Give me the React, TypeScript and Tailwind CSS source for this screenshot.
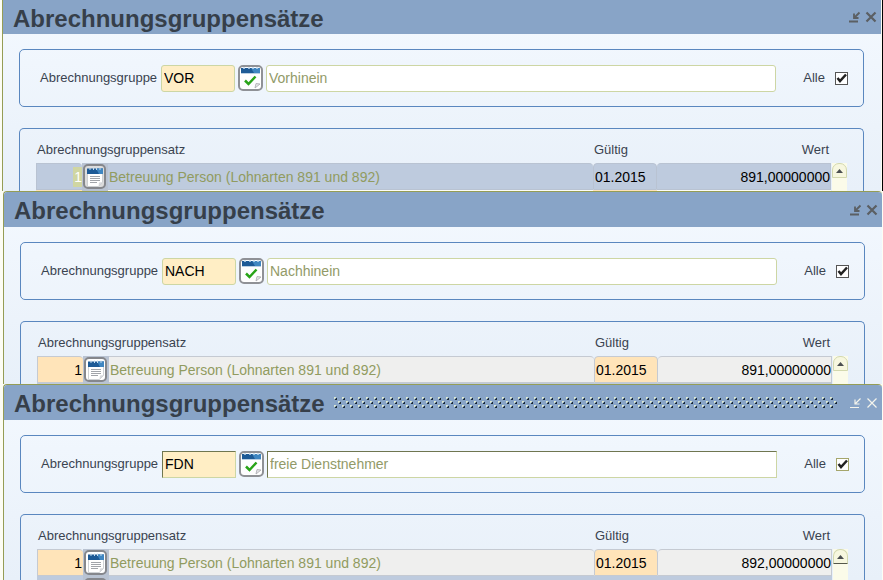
import { clsx } from 'clsx';

interface GroupRate {
  index: number;
  label: string;
  valid: string;
  value: string;
}

interface RateWindowProps {
  id: string;
  code: string;
  name: string;
  rate: GroupRate;
  active?: boolean;
  selected?: boolean;
  className?: string;
}

function CalendarCheckIcon() {
  return (
    <svg viewBox="0 0 21 22" className="h-[22px] w-[21px] shrink-0" aria-hidden="true">
      <path d="M1 3h19v14l-4 4H1z" fill="#fdfdfe" />
      <path d="M1 1h19v5H1z" fill="#1d5a96" />
      <path d="M11 1h9v5h-6z" fill="#3f86c1" />
      <path d="M4 0v2M9 0v2M13 0v2M17 0v2" stroke="#c5dcef" strokeWidth="1.5" />
      <path d="M1 6.500h19" stroke="#b9cfe3" />
      <path d="M5 13.500l3.500 3.500 7-7.500" fill="none" stroke="#28a318" strokeWidth="2.500" />
      <path d="M15 21l1-4.500 4 .5z" fill="#e5e5e8" stroke="#a9a9ae" strokeWidth="0.800" />
    </svg>
  );
}

function CalendarListIcon() {
  return (
    <svg viewBox="0 0 18 20" className="h-[20px] w-[18px] shrink-0" aria-hidden="true">
      <path d="M1.500 4h15v11.500l-4 4h-11z" fill="#fff" stroke="#c3c6ca" strokeWidth="0.800" />
      <path d="M1 1.500h16V7H1z" fill="#1d5a96" />
      <path d="M10 1.500h7V7h-4z" fill="#3f86c1" />
      <path d="M4 .5V3M7.500.5V3M10.500.5V3M14 .5V3" stroke="#c5dcef" />
      <path d="M4 9.500h10M4 11.500h10M4 13.500h10M4 15.500h7" stroke="#a2a5aa" />
      <path d="M12.500 19.500l.5-4 3.500-.5z" fill="#d9dadd" />
    </svg>
  );
}

function TitleBar({ active, short }: { active?: boolean; short?: boolean }) {
  return (
    <header
      className={clsx('flex shrink-0 items-center bg-[#88a4c7] pl-2.5 pr-1', short ? 'h-[34px]' : 'h-[35px]')}
    >
      <h2 className="pt-[3px] text-[24px] leading-[28px] font-bold text-[#363f4a]">
        Abrechnungsgruppensätze
      </h2>
      <div className="ml-2 mr-3 h-3 flex-1">
        {active && (
          <svg className="h-3 w-full" aria-hidden="true">
            <defs>
              <pattern id="grip" width="8" height="8" patternUnits="userSpaceOnUse">
                <path d="M1 0h2v1H2v1H1zM5 4h2v1H6v1H5z" fill="#dde8cf" />
                <path d="M3 1h1v2H2V2h1zM7 5h1v2H6V6h1z" fill="#1c2a33" />
              </pattern>
            </defs>
            <rect width="100%" height="12" fill="url(#grip)" />
          </svg>
        )}
      </div>
      <div className={clsx('flex items-center gap-1', active ? 'text-[#f4f4ec]' : 'text-[#5b5f63]')}>
        <button type="button" aria-label="Minimieren">
          <svg viewBox="0 0 12 12" className="size-3" fill="none" stroke="currentColor" strokeWidth={active ? 1.2 : 1.8}>
            <path d="M0 10.500h9M10.500 1.500L5 7M5 2.500V7h4.500" />
          </svg>
        </button>
        <button type="button" aria-label="Schließen">
          <svg viewBox="0 0 12 12" className="size-3" fill="none" stroke="currentColor" strokeWidth={active ? 1.2 : 2.2}>
            <path d="M1.500 1.500l9 9M10.500 1.500l-9 9" />
          </svg>
        </button>
      </div>
    </header>
  );
}

function ScrollColumn({ active }: { active?: boolean }) {
  return (
    <div className="ml-px mt-[34px] flex w-[15px] shrink-0 flex-col bg-[#fbfbe9]">
      <button
        type="button"
        aria-label="Nach oben"
        className={clsx(
          'flex h-[15px] items-center justify-center rounded-t-[7px] border border-[#d3d8ae] bg-[#f7f7df]',
          active && 'border-b-[#55584a]'
        )}
      >
        <svg viewBox="0 0 7 4" className="h-1 w-[7px]" aria-hidden="true">
          <path d="M0 4l3.500-4L7 4z" fill="#4b4e50" />
        </svg>
      </button>
    </div>
  );
}

function RateWindow({ id, code, name, rate, active, selected, className }: RateWindowProps) {
  const fieldBorder = active
    ? 'border border-[#cdd6a4] border-t-[#6f7650] border-l-[#6f7650]'
    : 'rounded-[3px] border border-[#cdd6a4]';
  const cell = selected ? 'border-[#b9c3d2] bg-[#becbde]' : 'border-[#c5cad2] bg-[#efefee]';
  const keyCell = selected ? 'border-[#b9c3d2] bg-[#becbde]' : 'border-[#c5cad2] bg-[#ffe4b9]';
  const nextCell = selected ? 'bg-[#fdfdf6]' : 'bg-[#becbde]';
  const nextKeyCell = selected ? 'bg-[#ffe4b9]' : 'bg-[#becbde]';

  return (
    <section
      className={clsx(
        'flex flex-col overflow-hidden border-l border-[#959d55] bg-linear-to-b from-[#f4f9ff] to-[#e8f0f9]',
        !selected && 'rounded-t-[4px] border-t',
        className
      )}
    >
      <TitleBar active={active} short={selected} />

      <div className="flex grow flex-col gap-[21px] pt-[15px] pl-4 pr-[17px]">
        {/* Filter */}
        <div className="flex h-[58px] shrink-0 items-center rounded-[5px] border border-[#5a87bf] pl-5 pr-[15px]">
          <label htmlFor={`${id}-code`} className="w-[121px] shrink-0 text-[13px] leading-5 text-[#3a4350]">
            Abrechnungsgruppe
          </label>
          <input
            id={`${id}-code`}
            defaultValue={code}
            className={clsx('h-[27px] w-[74px] shrink-0 bg-[#ffeec5] px-0.5 text-[14px] text-black', fieldBorder)}
          />
          <button
            type="button"
            aria-label="Auswahl öffnen"
            className="mx-[3px] flex h-[26px] w-[25px] shrink-0 items-center justify-center rounded-[5px] border-2 border-[#8f9196] bg-white"
          >
            <CalendarCheckIcon />
          </button>
          <input
            aria-label="Bezeichnung"
            defaultValue={name}
            readOnly
            className={clsx('h-[27px] min-w-0 grow bg-white px-0.5 text-[14px] text-[#929a68]', fieldBorder)}
          />
          <label className="ml-[27px] flex shrink-0 items-center gap-2.5 text-[13px] leading-5 text-[#3a4350]">
            Alle
            <input
              type="checkbox"
              defaultChecked
              className={clsx(
                'size-[13px] appearance-none border bg-white bg-[url("data:image/svg+xml,%3Csvg%20xmlns=%27http://www.w3.org/2000/svg%27%20viewBox=%270%200%2011%2011%27%3E%3Cpath%20d=%27M1.500%205L4%208l6-6.500%27%20fill=%27none%27%20stroke=%27%23222%27%20stroke-width=%272.500%27/%3E%3C/svg%3E")]',
                active ? 'border-[#a5a66c]' : 'border-[#555]'
              )}
            />
          </label>
        </div>

        {/* Rates */}
        <div className="flex grow rounded-t-[5px] border border-b-0 border-[#5a87bf] pl-4 pr-4">
          <table className="grow table-fixed border-separate border-spacing-0 self-start">
            <colgroup>
              <col className="w-[46px]" />
              <col className="w-[26px]" />
              <col />
              <col className="w-[64px]" />
              <col className="w-[174px]" />
            </colgroup>
            <thead>
              <tr className="h-[34px] text-left align-bottom text-[13px] leading-5 text-[#3a4350]">
                <th colSpan={3} className="p-0 pb-[3px] pl-px font-normal">Abrechnungsgruppensatz</th>
                <th className="p-0 pb-[3px] pl-px font-normal">Gültig</th>
                <th className="p-0 pb-[3px] pr-0.5 text-right font-normal">Wert</th>
              </tr>
            </thead>
            <tbody className="text-[14px] leading-5">
              <tr className="h-[27px]">
                <td className={clsx('rounded-tr-[4px] border-y border-l p-0 text-right', keyCell)}>
                  <input
                    aria-label="Nummer"
                    defaultValue={rate.index}
                    className={clsx(
                      'block text-right',
                      selected ? 'ml-auto h-5 w-[9px] bg-[#d0d6a2] text-white' : 'h-[25px] w-full px-px text-black'
                    )}
                  />
                </td>
                <td className="bg-[#b9c3d2] p-0">
                  <button
                    type="button"
                    aria-label="Satz öffnen"
                    className={clsx(
                      'ml-px flex h-[25px] w-[23px] items-center justify-center rounded-[5px] border-2 border-[#85878c]',
                      selected ? 'bg-[#dcdcdc]' : 'bg-white'
                    )}
                  >
                    <CalendarListIcon />
                  </button>
                </td>
                <td className={clsx('rounded-tr-[4px] border-y p-0', cell)}>
                  <input
                    aria-label="Bezeichnung"
                    readOnly
                    defaultValue={rate.label}
                    className="block h-[25px] w-full px-px text-[#919b60]"
                  />
                </td>
                <td className={clsx('rounded-t-[4px] border p-0', keyCell)}>
                  <input
                    aria-label="Gültig"
                    defaultValue={rate.valid}
                    className="block h-[25px] w-full px-px text-black"
                  />
                </td>
                <td className={clsx('rounded-tl-[4px] border-y border-r p-0', cell)}>
                  <input
                    aria-label="Wert"
                    readOnly
                    defaultValue={rate.value}
                    className="block h-[25px] w-full text-right text-black"
                  />
                </td>
              </tr>
              {/* next record, mostly hidden by the window in front */}
              <tr className={active ? 'h-[27px]' : 'h-px'}>
                <td className={clsx('p-0', nextKeyCell)} />
                <td className="bg-[#b9c3d2] p-0 align-top">
                  {active && (
                    <button
                      type="button"
                      aria-label="Satz öffnen"
                      className="ml-px mt-0.5 block h-[23px] w-[23px] rounded-[5px] border-2 border-[#85878c] bg-[#dcdcdc]"
                    />
                  )}
                </td>
                <td className={clsx('p-0', nextCell)} />
                <td className={clsx('p-0', nextKeyCell)} />
                <td className={clsx('p-0', nextCell)} />
              </tr>
            </tbody>
          </table>
          <ScrollColumn active={active} />
        </div>
      </div>
    </section>
  );
}

export default function App() {
  const label = 'Betreuung Person (Lohnarten 891 und 892)';

  return (
    <main className="flex h-screen flex-col overflow-hidden bg-[#fdfdf4] font-['Liberation_Sans',Arial,sans-serif]">
      <div className="shrink-0 border-r border-black pl-0.5 pr-px">
        <RateWindow
          id="vor"
          code="VOR"
          name="Vorhinein"
          rate={{ index: 1, label, valid: '01.2015', value: '891,00000000' }}
          selected
        />
      </div>
      <RateWindow
        id="nach"
        code="NACH"
        name="Nachhinein"
        rate={{ index: 1, label, valid: '01.2015', value: '891,00000000' }}
        className="ml-[3px] mr-px shrink-0"
      />
      <RateWindow
        id="fdn"
        code="FDN"
        name="freie Dienstnehmer"
        rate={{ index: 1, label, valid: '01.2015', value: '892,00000000' }}
        active
        className="ml-[3px] mr-px min-h-0 grow"
      />
    </main>
  );
}
